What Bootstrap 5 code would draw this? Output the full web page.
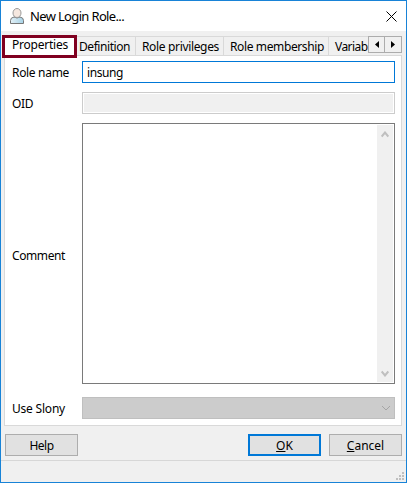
<!DOCTYPE html>
<html lang="en">
<head>
<meta charset="utf-8">
<meta name="viewport" content="width=device-width, initial-scale=1">
<title>New Login Role...</title>
<link href="https://cdn.jsdelivr.net/npm/bootstrap@5.3.0/dist/css/bootstrap.min.css" rel="stylesheet">
<style>
body{font:12px/16px "Noto Sans",sans-serif;color:#000;background:#fff;overflow:hidden}
.window{width:407px;height:483px;border:1px solid #1883d7;background:#f0f0f0}
.titlebar{height:30px;padding:0 9px 0 8px}
.titlebar h1{font-size:13px;line-height:20px;margin:0 0 0 5px}
.tx{display:inline-block;white-space:nowrap}
.tabstrip{height:24px;padding:5px 4px 0 3px}
.tabstrip .nav{height:19px;width:364px;overflow:hidden}
.tab{height:19px;border:solid #d9d9d9;border-width:1px 1px 0 0;padding:1px 0 0;line-height:18px;color:#000;background:#f0f0f0;flex:none}
.tab.active{width:72px;background:#fff;padding:0 0 0 8px;line-height:16px}
.tab-definition{width:60px;padding-left:3px}
.tab-privileges{width:88px;padding-left:6px}
.tab-membership{width:105px;padding-left:6px}
.tab-variables{width:39px;padding-left:6px;border-right:0}
.highlight{left:1px;top:34px;width:75px;height:23px;border:3px solid #800020;z-index:2}
.arrow{width:17px;height:17px;border:1px solid #acacac;background:#f0f0f0;padding:0}
.arrow+.arrow{margin-left:-1px;width:18px}
.panel{margin:0 4px 0 3px;height:371px;border:1px solid #d9d9d9;background:#fff;padding:5px 6px 0 7px}
.panel>.form-line+.form-line{margin-top:9px}
.panel>.form-line:last-child{margin-top:13px}
.field-label{width:70px;flex:none;padding-top:2px}
.memo-label{padding-top:4px}
.field{width:313px;height:22px;border-radius:0;flex:none}
.text-field{border:1px solid #0078d7;padding:0 4px;line-height:21px;background:#fff}
.text-off{border:1px solid #ccc;padding:1px;background:#f0f0f0 content-box}
.memo{height:261px;border:1px solid #7a7a7a;padding:1px}
.scroll{width:16px;background:#f0f0f0;padding:6px 0 5px}
.combo{border:1px solid #bfbfbf;background:#ccc;padding-right:3px}
.actions{padding:8px 4px 0 4px;height:34px}
.push{width:73px;height:22px;border:1px solid #adadad;border-radius:0;background:#e1e1e1;font-size:12px;line-height:21px;padding:0;color:#000}
.push-default{border:2px solid #0078d7;line-height:19px;margin-right:8px}
.statusbar{border-top:1px solid #d7d7d7;height:22px;padding:0 2px 2px}
svg{display:block;flex:none}
</style>
<script src="https://cdn.jsdelivr.net/npm/bootstrap@5.3.0/dist/js/bootstrap.bundle.min.js"></script>
</head>
<body>
<main class="window position-relative">
  <header class="titlebar d-flex align-items-center bg-white">
    <svg width="16" height="16" viewBox="0 0 16 16"><defs><linearGradient id="coat" x2="1"><stop stop-color="#e4f1f7"/><stop offset="1" stop-color="#a7d2e6"/></linearGradient></defs><path d="M1.500 15.500v-3q0-3 3.500-3.500l3 1 3-1q3.500.5 3.500 3.500v3z" fill="url(#coat)" stroke="#777"/><ellipse cx="8" cy="5" rx="4" ry="4.500" fill="#f5e7df" stroke="#999"/></svg>
    <h1 class="fw-normal"><span class="tx" data-w="94">New Login Role...</span></h1>
    <svg class="ms-auto" width="11" height="11" viewBox="0 0 11 11"><path d="M.5.500l10 10M10.500.500l-10 10" stroke="#000" fill="none"/></svg>
  </header>
  <div class="tabstrip d-flex">
    <nav class="nav flex-nowrap">
      <a class="tab active text-decoration-none"><span class="tx" data-w="56">Properties</span></a>
      <a class="tab tab-definition text-decoration-none"><span class="tx" data-w="51">Definition</span></a>
      <a class="tab tab-privileges text-decoration-none"><span class="tx" data-w="77">Role privileges</span></a>
      <a class="tab tab-membership text-decoration-none"><span class="tx" data-w="94">Role membership</span></a>
      <a class="tab tab-variables text-decoration-none"><span class="tx" data-w="32.500">Variab</span></a>
    </nav>
    <div class="d-flex">
      <button class="arrow d-flex align-items-center justify-content-center" aria-label="Previous tabs"><svg width="4" height="7" viewBox="0 0 4 7"><path d="M4 0v7L0 3.500z"/></svg></button>
      <button class="arrow d-flex align-items-center justify-content-center" aria-label="Next tabs"><svg width="4" height="7" viewBox="0 0 4 7"><path d="M0 0v7l4-3.500z"/></svg></button>
    </div>
  </div>
  <div class="highlight position-absolute"></div>
  <section class="panel d-flex flex-column">
    <div class="form-line d-flex align-items-center"><label class="field-label"><span class="tx" data-w="57">Role name</span></label><div class="field text-field"><span class="tx" data-w="36">insung</span></div></div>
    <div class="form-line d-flex align-items-center"><label class="field-label"><span class="tx" data-w="21">OID</span></label><div class="field text-off"></div></div>
    <div class="form-line d-flex align-items-center"><label class="field-label memo-label"><span class="tx" data-w="53">Comment</span></label>
      <div class="field memo d-flex justify-content-end"><div class="scroll d-flex flex-column justify-content-between align-items-center">
        <svg width="8" height="7" viewBox="0 0 8 7"><path d="M.7 5.500L4 1.500l3.300 4" stroke="#bfbfbf" stroke-width="2" fill="none"/></svg>
        <svg width="8" height="7" viewBox="0 0 8 7"><path d="M.7 1.500L4 5.500l3.300-4" stroke="#bfbfbf" stroke-width="2" fill="none"/></svg>
      </div></div>
    </div>
    <div class="form-line d-flex align-items-center"><label class="field-label"><span class="tx" data-w="53">Use Slony</span></label><div class="field combo d-flex align-items-center justify-content-end"><svg width="10" height="6" viewBox="0 0 10 6"><path d="M1 1l4 4 4-4" stroke="#a5a5a5" fill="none"/></svg></div></div>
  </section>
  <div class="actions d-flex">
    <button class="btn push me-auto"><span class="tx" data-w="24">Help</span></button>
    <button class="btn push push-default"><u>O</u>K</button>
    <button class="btn push"><u>C</u>ancel</button>
  </div>
  <footer class="statusbar d-flex justify-content-end align-items-end"><svg width="8" height="8" viewBox="0 0 8 8" fill="#bfbfbf"><path d="M6 0h2v2H6zM3 3h2v2H3zM6 3h2v2H6zM0 6h2v2H0zM3 6h2v2H3zM6 6h2v2H6z"/></svg></footer>
</main>
<script>
// Fit each label to its design width by adjusting the tracking.
document.querySelectorAll('.tx').forEach(function(el){
  var gap=(el.dataset.w-el.getBoundingClientRect().width)/el.textContent.length;
  el.style.letterSpacing=gap+'px';
});
</script>
</body>
</html>
